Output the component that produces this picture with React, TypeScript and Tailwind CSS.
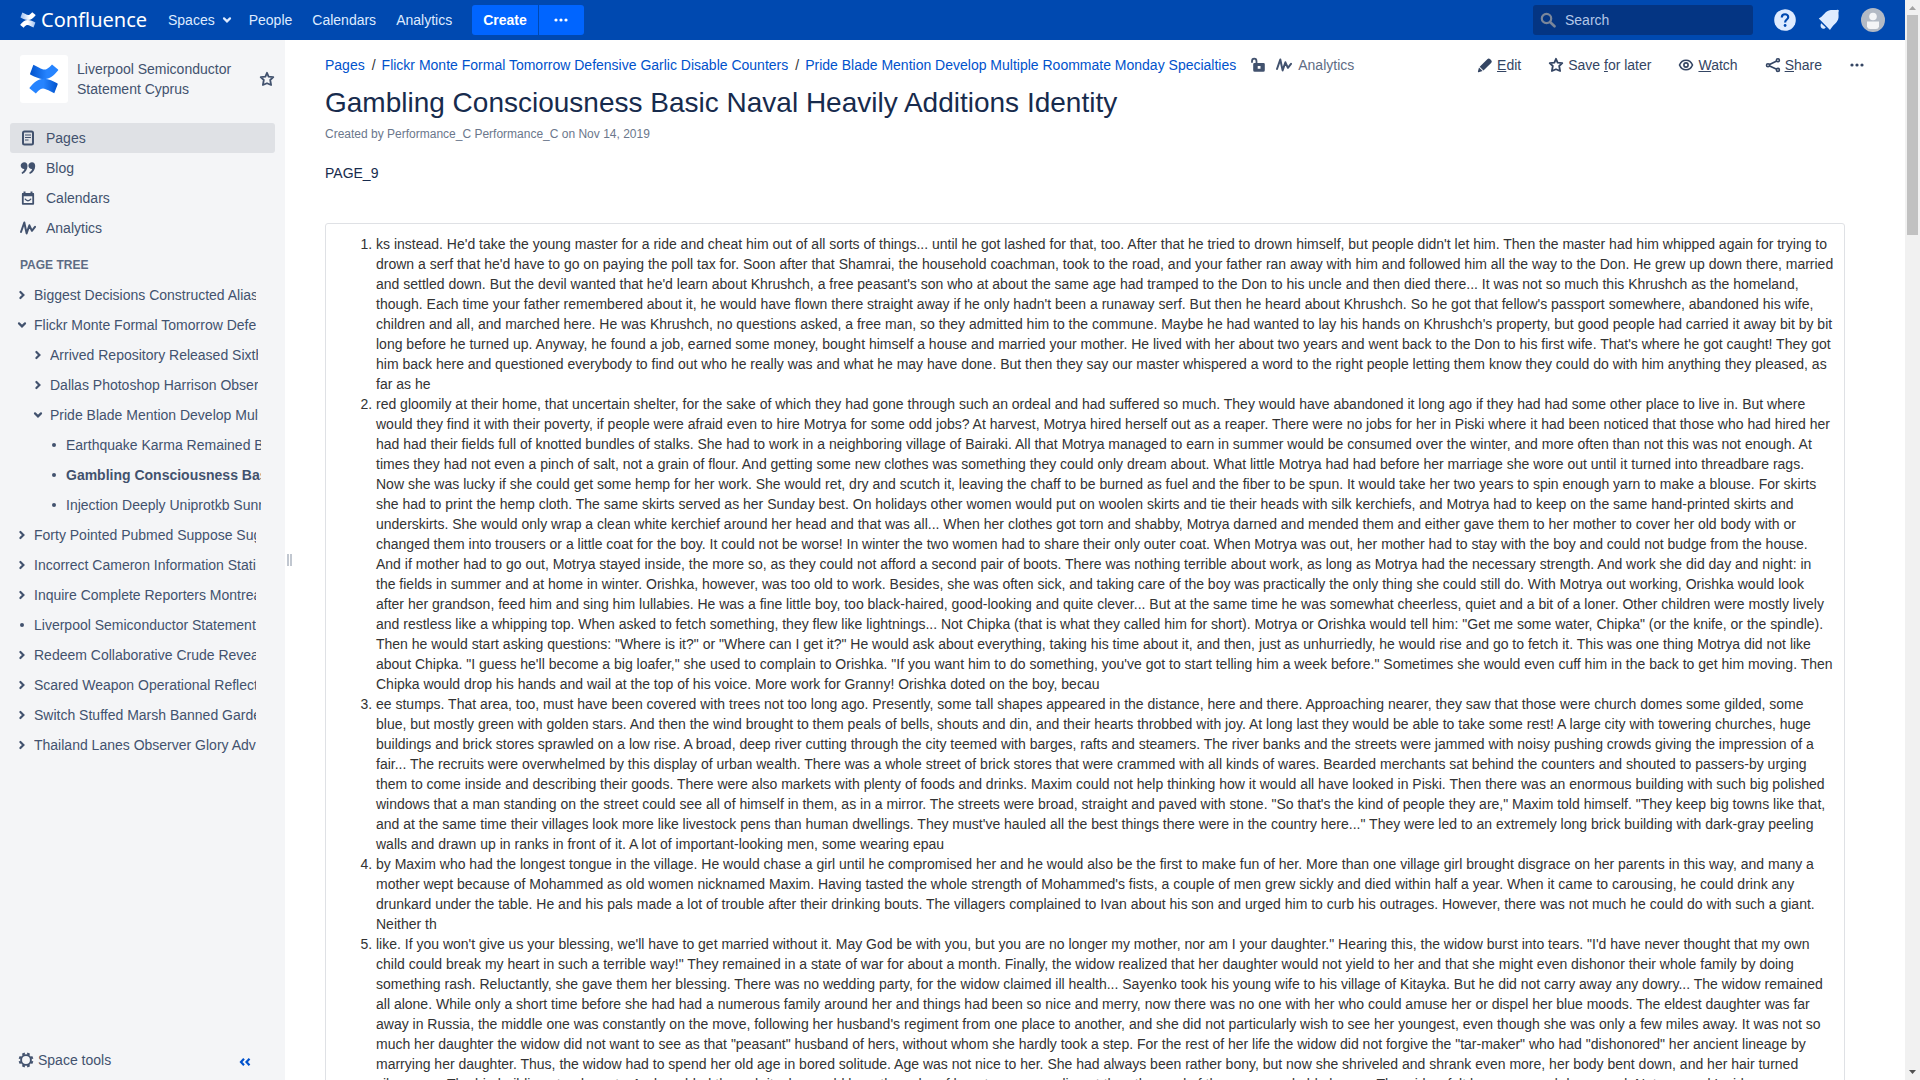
import React from "react";

const items: string[] = [
  `ks instead. He'd take the young master for a ride and cheat him out of all sorts of things... until he got lashed for that, too. After that he tried to drown himself, but people didn't let him. Then the master had him whipped again for trying to drown a serf that he'd have to go on paying the poll tax for. Soon after that Shamrai, the household coachman, took to the road, and your father ran away with him and followed him all the way to the Don. He grew up down there, married and settled down. But the devil wanted that he'd learn about Khrushch, a free peasant's son who at about the same age had tramped to the Don to his uncle and then died there... It was not so much this Khrushch as the homeland, though. Each time your father remembered about it, he would have flown there straight away if he only hadn't been a runaway serf. But then he heard about Khrushch. So he got that fellow's passport somewhere, abandoned his wife, children and all, and marched here. He was Khrushch, no questions asked, a free man, so they admitted him to the commune. Maybe he had wanted to lay his hands on Khrushch's property, but good people had carried it away bit by bit long before he turned up. Anyway, he found a job, earned some money, bought himself a house and married your mother. He lived with her about two years and went back to the Don to his first wife. That's where he got caught! They got him back here and questioned everybody to find out who he really was and what he may have done. But then they say our master whispered a word to the right people letting them know they could do with him anything they pleased, as far as he`,
  `red gloomily at their home, that uncertain shelter, for the sake of which they had gone through such an ordeal and had suffered so much. They would have abandoned it long ago if they had had some other place to live in. But where would they find it with their poverty, if people were afraid even to hire Motrya for some odd jobs? At harvest, Motrya hired herself out as a reaper. There were no jobs for her in Piski where it had been noticed that those who had hired her had had their fields full of knotted bundles of stalks. She had to work in a neighboring village of Bairaki. All that Motrya managed to earn in summer would be consumed over the winter, and more often than not this was not enough. At times they had not even a pinch of salt, not a grain of flour. And getting some new clothes was something they could only dream about. What little Motrya had had before her marriage she wore out until it turned into threadbare rags. Now she was lucky if she could get some hemp for her work. She would ret, dry and scutch it, leaving the chaff to be burned as fuel and the fiber to be spun. It would take her two years to spin enough yarn to make a blouse. For skirts she had to print the hemp cloth. The same skirts served as her Sunday best. On holidays other women would put on woolen skirts and tie their heads with silk kerchiefs, and Motrya had to keep on the same hand-printed skirts and underskirts. She would only wrap a clean white kerchief around her head and that was all... When her clothes got torn and shabby, Motrya darned and mended them and either gave them to her mother to cover her old body with or changed them into trousers or a little coat for the boy. It could not be worse! In winter the two women had to share their only outer coat. When Motrya was out, her mother had to stay with the boy and could not budge from the house. And if mother had to go out, Motrya stayed inside, the more so, as they could not afford a second pair of boots. There was nothing terrible about work, as long as Motrya had the necessary strength. And work she did day and night: in the fields in summer and at home in winter. Orishka, however, was too old to work. Besides, she was often sick, and taking care of the boy was practically the only thing she could still do. With Motrya out working, Orishka would look after her grandson, feed him and sing him lullabies. He was a fine little boy, too black-haired, good-looking and quite clever... But at the same time he was somewhat cheerless, quiet and a bit of a loner. Other children were mostly lively and restless like a whipping top. When asked to fetch something, they flew like lightnings... Not Chipka (that is what they called him for short). Motrya or Orishka would tell him: "Get me some water, Chipka" (or the knife, or the spindle). Then he would start asking questions: "Where is it?" or "Where can I get it?" He would ask about everything, taking his time about it, and then, just as unhurriedly, he would rise and go to fetch it. This was one thing Motrya did not like about Chipka. "I guess he'll become a big loafer," she used to complain to Orishka. "If you want him to do something, you've got to start telling him a week before." Sometimes she would even cuff him in the back to get him moving. Then Chipka would drop his hands and wail at the top of his voice. More work for Granny! Orishka doted on the boy, becau`,
  `ee stumps. That area, too, must have been covered with trees not too long ago. Presently, some tall shapes appeared in the distance, here and there. Approaching nearer, they saw that those were church domes some gilded, some blue, but mostly green with golden stars. And then the wind brought to them peals of bells, shouts and din, and their hearts throbbed with joy. At long last they would be able to take some rest! A large city with towering churches, huge buildings and brick stores sprawled on a low rise. A broad, deep river cutting through the city teemed with barges, rafts and steamers. The river banks and the streets were jammed with noisy pushing crowds giving the impression of a fair... The recruits were overwhelmed by this display of urban wealth. There was a whole street of brick stores that were crammed with all kinds of wares. Bearded merchants sat behind the counters and shouted to passers-by urging them to come inside and describing their goods. There were also markets with plenty of foods and drinks. Maxim could not help thinking how it would all have looked in Piski. Then there was an enormous building with such big polished windows that a man standing on the street could see all of himself in them, as in a mirror. The streets were broad, straight and paved with stone. "So that's the kind of people they are," Maxim told himself. "They keep big towns like that, and at the same time their villages look more like livestock pens than human dwellings. They must've hauled all the best things there were in the country here..." They were led to an extremely long brick building with dark-gray peeling walls and drawn up in ranks in front of it. A lot of important-looking men, some wearing epau`,
  `by Maxim who had the longest tongue in the village. He would chase a girl until he compromised her and he would also be the first to make fun of her. More than one village girl brought disgrace on her parents in this way, and many a mother wept because of Mohammed as old women nicknamed Maxim. Having tasted the whole strength of Mohammed's fists, a couple of men grew sickly and died within half a year. When it came to carousing, he could drink any drunkard under the table. He and his pals made a lot of trouble after their drinking bouts. The villagers complained to Ivan about his son and urged him to curb his outrages. However, there was not much he could do with such a giant. Neither th`,
  `like. If you won't give us your blessing, we'll have to get married without it. May God be with you, but you are no longer my mother, nor am I your daughter." Hearing this, the widow burst into tears. "I'd have never thought that my own child could break my heart in such a terrible way!" They remained in a state of war for about a month. Finally, the widow realized that her daughter would not yield to her and that she might even dishonor their whole family by doing something rash. Reluctantly, she gave them her blessing. There was no wedding party, for the widow claimed ill health... Sayenko took his young wife to his village of Kitayka. But he did not carry away any dowry... The widow remained all alone. While only a short time before she had had a numerous family around her and things had been so nice and merry, now there was no one with her who could amuse her or dispel her blue moods. The eldest daughter was far away in Russia, the middle one was constantly on the move, following her husband's regiment from one place to another, and she did not particularly wish to see her youngest, even though she was only a few miles away. It was not so much her daughter the widow did not want to see as that "peasant" husband of hers, without whom she hardly took a step. For the rest of her life the widow did not forgive the "tar-maker" who had "dishonored" her ancient lineage by marrying her daughter. Thus, the widow had to spend her old age in bored solitude. Age was not nice to her. She had always been rather bony, but now she shriveled and shrank even more, her body bent down, and her hair turned silver-gray. The big building stood empty. And rambled through it, she would hear the echo of her steps resounding at the other end of the rooms and old alcoves. The widow felt lonesome and depressed. Not a sound Inside`,
];

type Kind = "closed" | "open" | "leaf";
const tree: { label: string; kind: Kind; level: 0 | 1 | 2; current?: boolean }[] = [
  { label: "Biggest Decisions Constructed Alias", kind: "closed", level: 0 },
  { label: "Flickr Monte Formal Tomorrow Defensive Garlic", kind: "open", level: 0 },
  { label: "Arrived Repository Released Sixth", kind: "closed", level: 1 },
  { label: "Dallas Photoshop Harrison Observer", kind: "closed", level: 1 },
  { label: "Pride Blade Mention Develop Multiple", kind: "open", level: 1 },
  { label: "Earthquake Karma Remained Basic", kind: "leaf", level: 2 },
  { label: "Gambling Consciousness Basic Naval", kind: "leaf", level: 2, current: true },
  { label: "Injection Deeply Uniprotkb Sunny", kind: "leaf", level: 2 },
  { label: "Forty Pointed Pubmed Suppose Suggest", kind: "closed", level: 0 },
  { label: "Incorrect Cameron Information Station", kind: "closed", level: 0 },
  { label: "Inquire Complete Reporters Montreal", kind: "closed", level: 0 },
  { label: "Liverpool Semiconductor Statement Cyprus", kind: "leaf", level: 0 },
  { label: "Redeem Collaborative Crude Reveal", kind: "closed", level: 0 },
  { label: "Scared Weapon Operational Reflect", kind: "closed", level: 0 },
  { label: "Switch Stuffed Marsh Banned Garden", kind: "closed", level: 0 },
  { label: "Thailand Lanes Observer Glory Advice", kind: "closed", level: 0 },
];
const indent = ["pl-[14px]", "pl-[30px]", "pl-[46px]"];
const treeWidth = ["w-[256px]", "w-[258px]", "w-[261px]"];

const svg = { width: 16, height: 16, viewBox: "0 0 16 16", fill: "none", "aria-hidden": true } as const;
const line = { stroke: "currentColor", strokeWidth: 2, strokeLinecap: "round", strokeLinejoin: "round" } as const;

function Star() {
  return (
    <svg {...svg} className="shrink-0">
      <path {...line} strokeWidth={1.8} d="M8 1.800l1.600 3.900 4.700.4-3.100 2.900.9 5L8 12.200 3.900 14l.9-5L1.700 6.100l4.700-.4z" />
    </svg>
  );
}
function Pulse() {
  return (
    <svg {...svg} className="shrink-0">
      <path {...line} d="M1 12L4.300 2.500 6.600 13.400 9.400 5.300l2.500 5.500L15 6.800" />
    </svg>
  );
}
function Dots() {
  return (
    <svg {...svg}>
      <g fill="currentColor">
        <circle cx="3" cy="8" r="1.6" />
        <circle cx="8" cy="8" r="1.6" />
        <circle cx="13" cy="8" r="1.6" />
      </g>
    </svg>
  );
}
function Chevron({ open }: { open?: boolean }) {
  return (
    <svg width="16" height="16" viewBox="0 0 16 16" fill="none" aria-hidden="true">
      <path {...line} strokeWidth={2.2} strokeLinejoin="miter" d={open ? "M5 6.400L8 9.400l3-3" : "M6.400 5L9.400 8l-3 3"} />
    </svg>
  );
}
function PageIcon() {
  return (
    <svg {...svg}>
      <rect x="3" y="1.500" width="10" height="13" rx="1.500" {...line} />
      <path d="M5 5h6M5 7.500h6M5 10h3.500" stroke="currentColor" strokeWidth="1.200" />
    </svg>
  );
}
function QuoteIcon() {
  return (
    <svg {...svg}>
      <path fill="currentColor" d="M4.300 2.200c2 0 3.200 1.500 3.200 3.800 0 3.600-2 6.700-5.300 8l-.7-1.300c1.600-.9 2.600-2.100 2.900-3.600-1.900.2-3.700-1.400-3.700-3.500 0-2 1.800-3.400 3.600-3.400zM12 2.200c2 0 3.200 1.500 3.200 3.800 0 3.600-2 6.700-5.300 8l-.7-1.300c1.600-.9 2.600-2.100 2.900-3.600-1.900.2-3.700-1.400-3.700-3.500 0-2 1.800-3.400 3.600-3.400z" />
    </svg>
  );
}
function CalendarIcon() {
  return (
    <svg {...svg}>
      <path d="M2.800 4h10.400v9.800H2.800z" {...line} strokeWidth={1.800} />
      <path d="M2 3.200h12v3H2zM3.500 1.500h2v2h-2zM10.500 1.500h2v2h-2z" fill="currentColor" />
      <path d="M5.300 9.200c1.300 2 4.100 2 5.400 0" {...line} strokeWidth={1.400} />
    </svg>
  );
}
function LogoMark({ white }: { white?: boolean }) {
  const id = white ? "mw" : "mb";
  const from = white ? "#9fc0f0" : "#0052cc";
  const to = white ? "#ffffff" : "#2684ff";
  return (
    <svg className={white ? "h-4 w-4" : "h-[30px] w-[30px]"} viewBox="0 0 24 28" preserveAspectRatio="none" aria-hidden="true">
      <defs>
        <linearGradient id={id + "1"} x1="0" x2="1"><stop offset="0" stopColor={to} /><stop offset=".5" stopColor={to} /><stop offset="1" stopColor={from} /></linearGradient>
        <linearGradient id={id + "2"} x1="0" x2="1"><stop offset="0" stopColor={from} /><stop offset=".6" stopColor={to} /></linearGradient>
      </defs>
      <path fill={`url(#${id}2)`} d="M3.500.8l4.700 2.600c2 1.100 3.900 2.600 6 1.300 1.700-1 3-2.600 4.200-4.200L23 4.800c.4.300.5.800.2 1.200-3.300 4.600-6.600 8.200-11.300 8.200-4 0-7.600-2.500-10.600-4.100-.5-.3-.6-.7-.4-1.200z" />
      <path fill={`url(#${id}1)`} d="M20.200 27.200l-4.700-2.600c-2-1.100-3.900-2.600-6-1.300-1.700 1-2.800 2.600-4 4.200L.8 23.200c-.4-.3-.5-.8-.2-1.200 3.300-4.600 6.600-8.200 11.300-8.200 4 0 7.600 2.500 10.600 4.100.5.300.6.700.4 1.200z" />
    </svg>
  );
}

const navIcons = [
  { label: "Pages", icon: <PageIcon />, active: true },
  { label: "Blog", icon: <QuoteIcon /> },
  { label: "Calendars", icon: <CalendarIcon /> },
  { label: "Analytics", icon: <Pulse /> },
];

function Header() {
  return (
    <header className="flex h-10 shrink-0 items-center bg-[#0049b0] pr-5 pl-5 text-[#deebff]">
      <a href="#home" className="flex items-center gap-[5px] font-['Noto_Sans',sans-serif] text-xl text-white">
        <LogoMark white />
        <span className="w-[107px] leading-10">Confluence</span>
      </a>
      <nav className="flex items-center pl-5">
        <a href="#spaces" className="flex items-center gap-1">Spaces <Chevron open /></a>
        <a href="#people" className="ml-[14px]">People</a>
        <a href="#calendars" className="ml-5">Calendars</a>
        <a href="#analytics" className="ml-5">Analytics</a>
      </nav>
      <div className="ml-5 flex gap-px">
        <button className="h-[30px] rounded-l-[3px] bg-[#0065ff] px-[11px] font-bold text-white">Create</button>
        <button aria-label="More" className="flex h-[30px] w-[45px] items-center justify-center rounded-r-[3px] bg-[#0065ff] text-white"><Dots /></button>
      </div>
      <label className="ml-auto flex h-[30px] w-[220px] items-center gap-[9px] rounded-[3px] bg-[#043583] pl-[7px]">
        <svg {...svg} className="text-[#7a869a]"><circle cx="6.500" cy="6.500" r="4.700" {...line} strokeWidth={2.200} /><path d="M10 10l4.500 4.300" {...line} strokeWidth={2.600} /></svg>
        <input aria-label="Search" placeholder="Search" className="w-40 bg-transparent outline-none placeholder:text-[#b3c7e8]" />
      </label>
      <button aria-label="Help" className="ml-5">
        <svg width="24" height="24" viewBox="0 0 24 24" fill="none"><circle cx="12" cy="12" r="10.800" fill="#deebff" /><path d="M8.800 9.500c0-4.400 6.600-4.200 6.400-.3-.1 2.300-3.100 2.400-3.100 5.300" stroke="#0049b0" strokeWidth="2.200" /><circle cx="12.100" cy="17.500" r="1.400" fill="#0049b0" /></svg>
      </button>
      <button aria-label="Notifications" className="ml-5">
        <svg width="24" height="24" viewBox="0 0 24 24" fill="#deebff"><path d="M1.800 10.600c4.500-2.200 6.500-8.100 12-8.600 3-.3 5 .5 6.500-.2.800-.4 2 .5 1.500 1.300-.8 1.500.1 4-.3 6.700-.7 5-5.500 7-8.500 12.200z" /><path d="M4.200 15.200l4.600 4.200c-1.200 1.600-3.400 1.500-4.300.5-1.100-1.100-1.200-3-.3-4.700z" /></svg>
      </button>
      <button aria-label="User menu" className="ml-5">
        <svg width="24" height="24" viewBox="0 0 24 24"><circle cx="12" cy="12" r="12" fill="#b3bac5" /><circle cx="12" cy="8.500" r="3.800" fill="#f4f5f7" /><path d="M6 13.500h12v5q-.5 2.500-3 2.500H9q-2.500 0-3-2.500z" fill="#f4f5f7" /></svg>
      </button>
    </header>
  );
}

function Sidebar() {
  return (
    <aside className="flex w-[285px] shrink-0 flex-col bg-[#f4f5f7] text-[#42526e]">
      <div className="flex h-[83px] items-start pt-[15px] pr-[10px] pl-5">
        <a href="#space" aria-label="Space home" className="flex h-12 w-12 shrink-0 items-center justify-center rounded-[3px] bg-white"><LogoMark /></a>
        <a href="#space" className="ml-[9px] w-[170px] pt-1 leading-5">Liverpool Semiconductor Statement Cyprus</a>
        <button aria-label="Favourite space" className="mt-4 ml-auto"><Star /></button>
      </div>
      <nav className="px-[10px]">
        {navIcons.map((n) => (
          <a key={n.label} href={"#" + n.label} className={"flex h-[30px] items-center gap-[10px] rounded-[3px] pl-[10px] " + (n.active ? "bg-[#dfe1e5]" : "")}>
            {n.icon}
            {n.label}
          </a>
        ))}
      </nav>
      <h2 className="mt-[11px] pl-5 text-xs leading-[22px] font-bold text-[#5e6c84]">PAGE TREE</h2>
      <ul className="mt-1">
        {tree.map((t) => (
          <li key={t.label} className={"flex h-[30px] items-center overflow-hidden whitespace-nowrap " + indent[t.level] + " " + treeWidth[t.level]}>
            {t.kind === "leaf" ? (
              <span className="flex w-4 shrink-0 justify-center"><span className="h-1 w-1 rounded-full bg-[#42526e]" /></span>
            ) : (
              <button aria-label="Toggle" className="w-4 shrink-0"><Chevron open={t.kind === "open"} /></button>
            )}
            <a href="#page" className={"ml-1 min-w-0 overflow-hidden " + (t.current ? "font-bold" : "")}>{t.label}</a>
          </li>
        ))}
      </ul>
      <div className="mt-auto flex h-10 items-center pr-8 pl-[18px]">
        <button className="flex items-center gap-1">
          <svg {...svg}>
            <circle cx="8" cy="8" r="4.900" {...line} strokeWidth={1.900} />
            <g stroke="currentColor" strokeWidth="2.800"><path d="M13 10l1.800.8M10 13l.8 1.900M6 13l-.8 1.900M3 10l-1.800.8M3 6l-1.800-.8M6 3l-.8-1.900M10 3l.8-1.900M13 6l1.800-.8" /></g>
          </svg>
          Space tools
        </button>
        <button aria-label="Collapse sidebar" className="mt-1 ml-auto text-[#0052cc]">
          <svg {...svg}><path d="M7 4.800L4 8l3 3.200M12.500 4.800L9.500 8l3 3.200" {...line} strokeLinecap="butt" strokeLinejoin="miter" strokeWidth={2.200} /></svg>
        </button>
      </div>
    </aside>
  );
}

function Actions() {
  return (
    <div className="flex h-5 items-center gap-[27px] text-[#344563]">
      <a href="#edit" className="flex items-center gap-1">
        <svg {...svg}><path fill="currentColor" d="M10.300 2.200c.9-.9 1.900-.9 2.700-.1l1.200 1.200c.8.800.8 1.800-.1 2.700l-7.600 7.500-3.800-3.800zM2 10.500l3.600 3.600-4 1.200c-.5.100-.8-.2-.7-.7z" /></svg>
        <span><u>E</u>dit</span>
      </a>
      <a href="#save" className="flex items-center gap-1"><Star /><span>Save <u>f</u>or later</span></a>
      <a href="#watch" className="flex items-center gap-1">
        <svg {...svg}><path d="M1.500 8c2.600-6.300 10.400-6.300 13 0-2.600 6.300-10.400 6.300-13 0z" {...line} strokeWidth={1.600} /><circle cx="8" cy="8" r="2.100" {...line} strokeWidth={1.600} /></svg>
        <span><u>W</u>atch</span>
      </a>
      <a href="#share" className="flex items-center gap-1">
        <svg {...svg}><path d="M3 8.300l9.800-4.800M3 8.300l9.800 4.500" {...line} strokeWidth={1.600} /><g fill="#fff" stroke="currentColor" strokeWidth="1.600"><circle cx="3" cy="8.200" r="1.500" /><circle cx="12.900" cy="3.300" r="1.500" /><circle cx="12.900" cy="12.900" r="1.500" /></g></svg>
        <span><u>S</u>hare</span>
      </a>
      <button aria-label="More actions"><Dots /></button>
    </div>
  );
}

export default function App() {
  return (
    <div className="flex h-screen overflow-hidden bg-white font-['Liberation_Sans',Arial,sans-serif] text-sm leading-5">
      <div className="flex min-w-0 flex-1 flex-col">
        <Header />
        <div className="flex min-h-0 flex-1">
          <Sidebar />
          <div className="flex w-[9px] shrink-0 items-center justify-center gap-px" aria-hidden="true">
            <span className="h-3 w-[2px] bg-[#c1c7d0]" />
            <span className="h-3 w-[2px] bg-[#c1c7d0]" />
          </div>
          <main className="min-w-0 flex-1 overflow-hidden pt-[15px] pr-10 pl-[31px] text-[#172b4d]">
            <div className="flex items-center justify-between">
              <nav aria-label="Breadcrumb" className="flex h-5 items-center whitespace-nowrap text-[#0052cc]">
                <a href="#pages">Pages</a>
                <span className="mr-[6px] ml-[7px] text-[#333]">/</span>
                <a href="#flickr">Flickr Monte Formal Tomorrow Defensive Garlic Disable Counters</a>
                <span className="mr-[6px] ml-[7px] text-[#333]">/</span>
                <a href="#pride">Pride Blade Mention Develop Multiple Roommate Monday Specialties</a>
                <button aria-label="Restrictions" className="ml-[14px] text-[#42526e]">
                  <svg {...svg}><path d="M2 5V4.200C2 .8 6.500.8 6.500 4.200V7" {...line} strokeWidth={1.800} /><path fill="currentColor" fillRule="evenodd" d="M4.500 6h9q1.300 0 1.300 1.300v6q0 1.500-1.500 1.500H4.700q-1.500 0-1.500-1.500v-6Q3.200 6 4.500 6zm3.200 3v2.800h2.800V9z" /></svg>
                </button>
                <a href="#page-analytics" className="ml-[10px] flex items-center gap-[6px] text-[#5e6c84]"><span className="text-[#42526e]"><Pulse /></span>Analytics</a>
              </nav>
              <Actions />
            </div>
            <h1 className="mt-3 text-[28px] leading-8">Gambling Consciousness Basic Naval Heavily Additions Identity</h1>
            <p className="mt-[5px] text-xs leading-5 text-[#6b778c]">Created by Performance_C Performance_C on Nov 14, 2019</p>
            <p className="mt-[19px]">PAGE_9</p>
            <div className="mt-10 mr-5 rounded-[3px] border border-[#dfe1e5] p-[10px] text-[#333]">
              <ol className="list-decimal pl-10">
                {items.map((t, i) => (
                  <li key={i}>{t}</li>
                ))}
              </ol>
            </div>
          </main>
        </div>
      </div>
      <div className="flex w-[15px] shrink-0 flex-col items-center bg-[#f1f1f1] py-[6px]" aria-hidden="true">
        <svg width="7" height="4" viewBox="0 0 7 4"><path d="M0 4l3.500-4L7 4z" fill="#a3a3a3" /></svg>
        <div className="mt-[5px] h-[220px] w-[11px] bg-[#c1c1c1]" />
        <svg className="mt-auto" width="7" height="4" viewBox="0 0 7 4"><path d="M0 0l3.500 4L7 0z" fill="#505050" /></svg>
      </div>
    </div>
  );
}
